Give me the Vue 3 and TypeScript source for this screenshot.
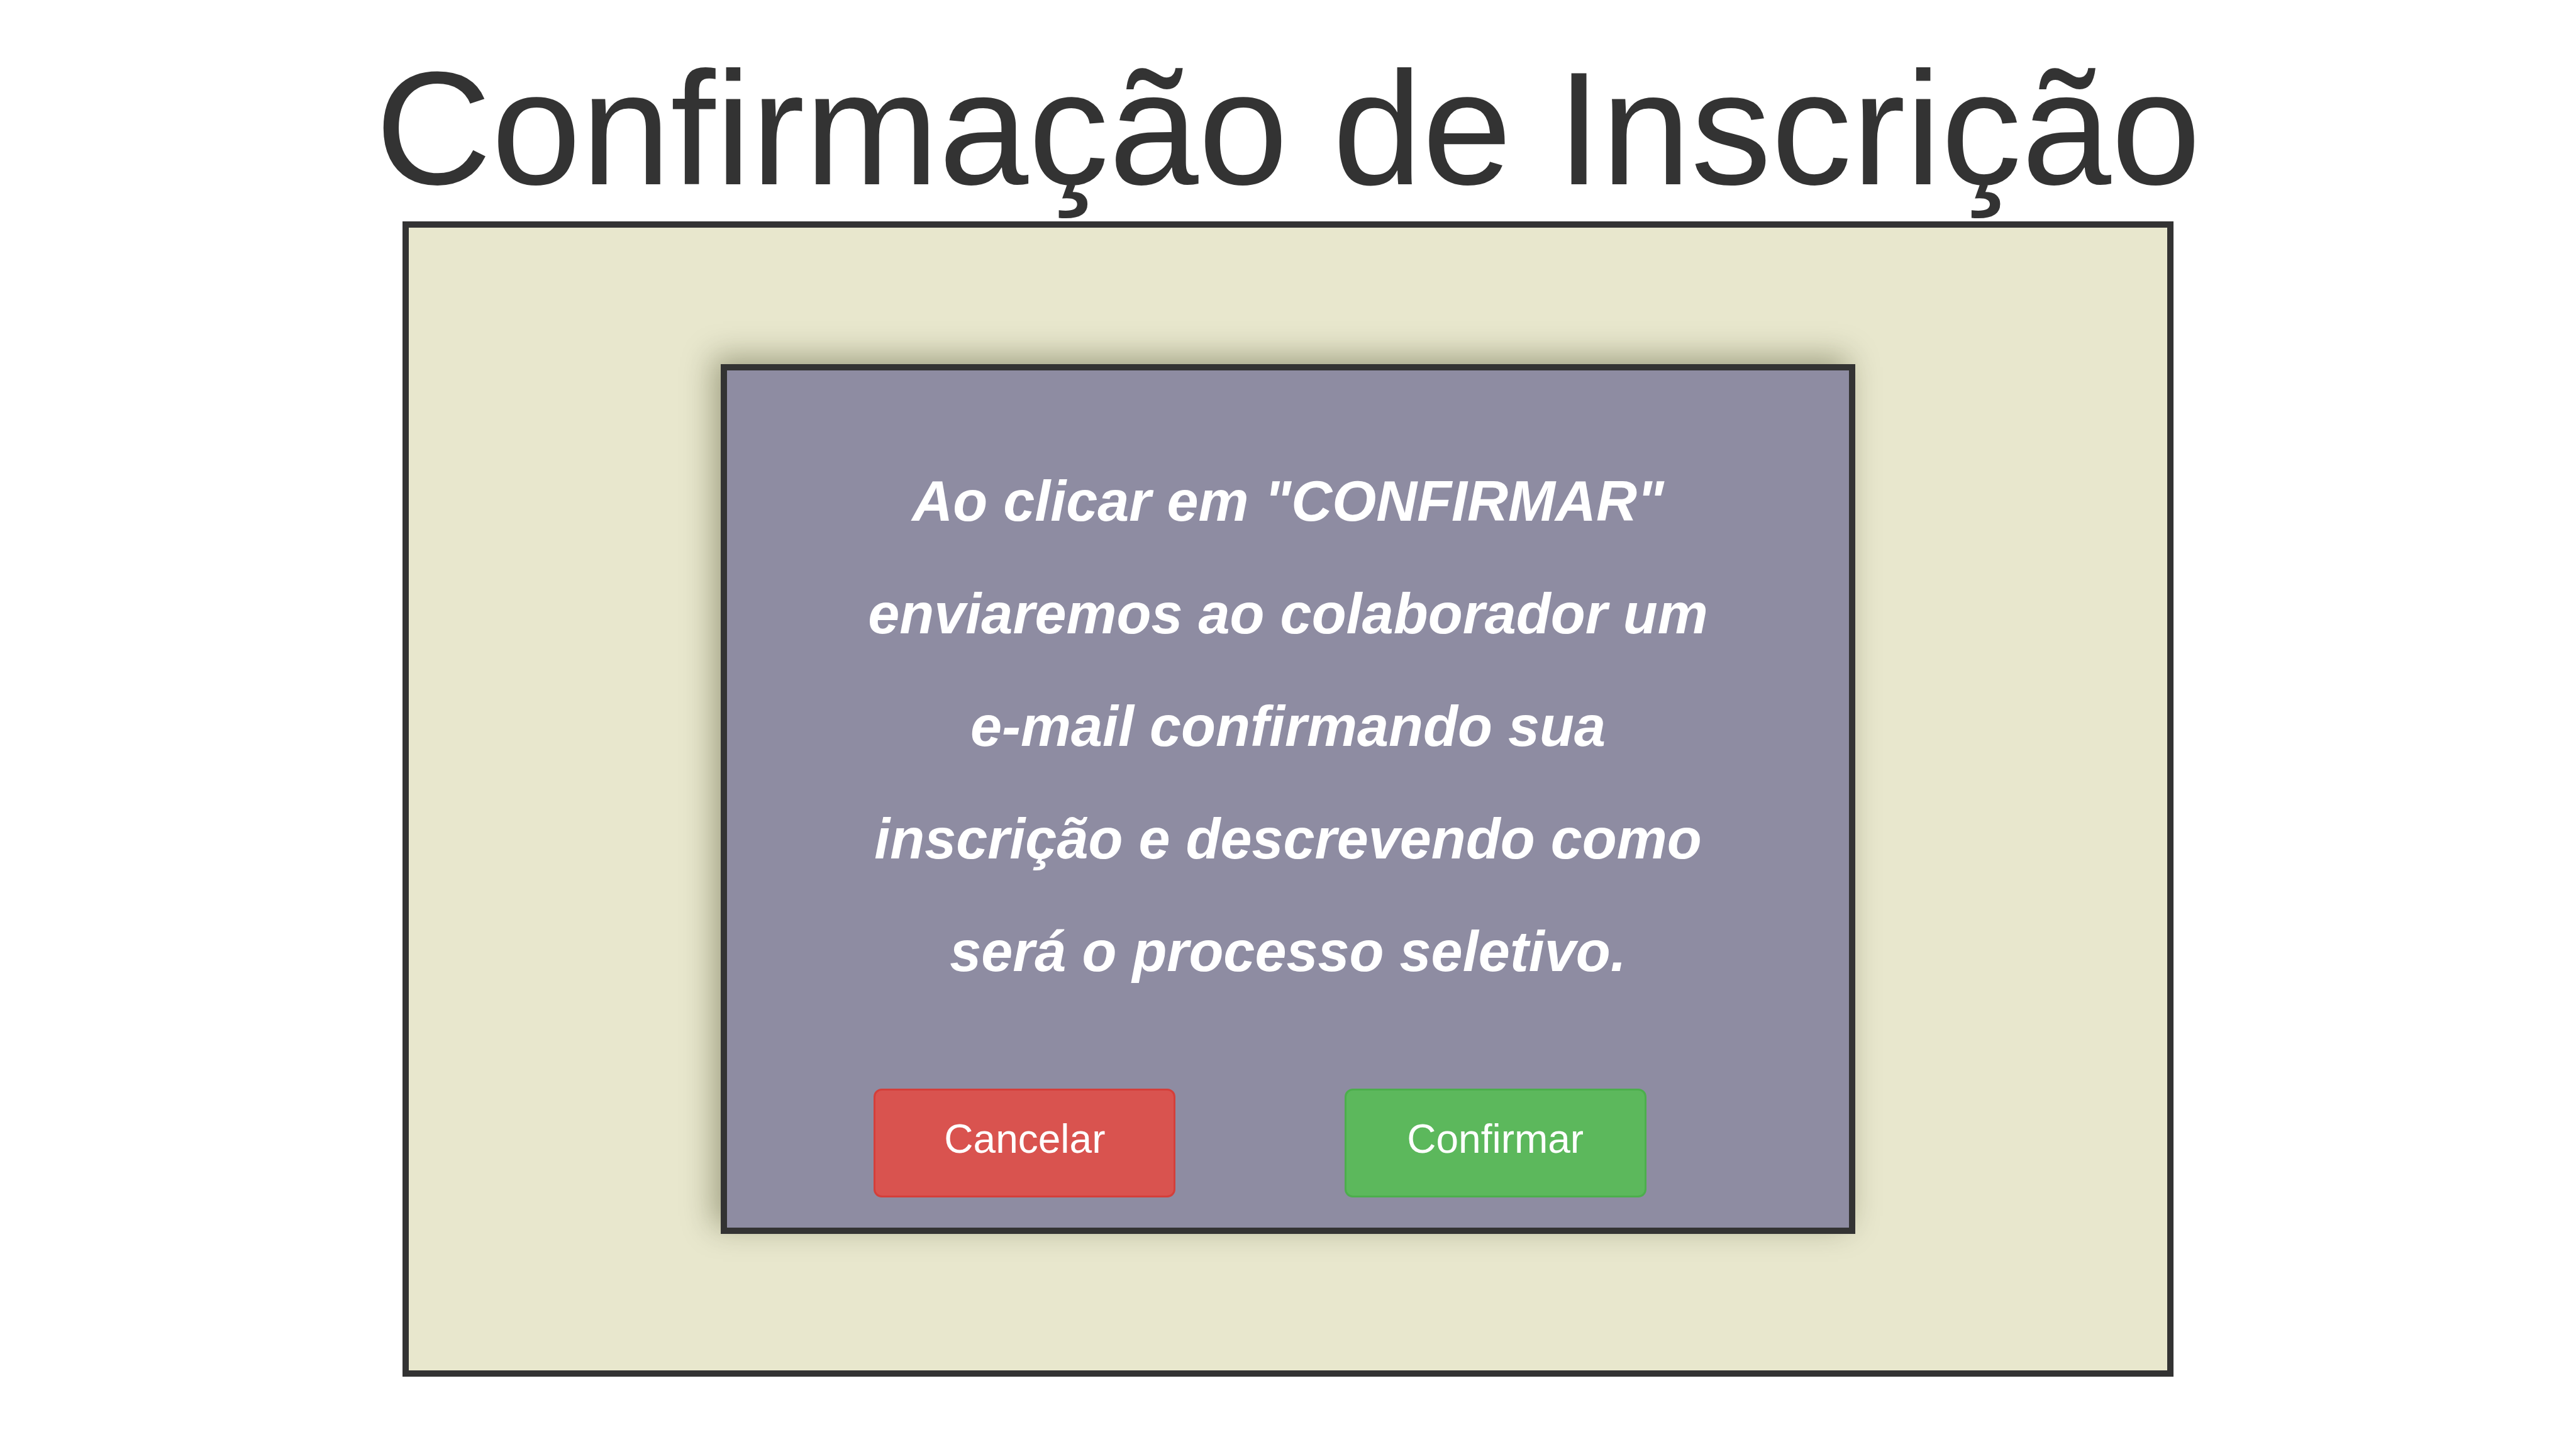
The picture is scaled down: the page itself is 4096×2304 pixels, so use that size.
<script setup lang="ts">
import { ref } from 'vue'

const status = ref<'pending' | 'cancelled' | 'confirmed'>('pending')
</script>

<template>
  <main class="page" :data-status="status">
    <h1 class="title">Confirmação de Inscrição</h1>
    <section class="panel">
      <div class="dialog">
        <p class="message">
          Ao clicar em "CONFIRMAR" enviaremos ao colaborador um e-mail confirmando sua inscrição e
          descrevendo como será o processo seletivo.
        </p>
        <div class="actions">
          <button type="button" class="btn btn-danger" @click="status = 'cancelled'">Cancelar</button>
          <button type="button" class="btn btn-success" @click="status = 'confirmed'">Confirmar</button>
        </div>
      </div>
    </section>
  </main>
</template>

<style>
body {
  background: #fff;
}
</style>

<style scoped>
.page {
  display: flex;
  flex-direction: column;
  align-items: center;
  padding: 64px 0;
  color: #333;
  font-family: Arial, "Liberation Sans", sans-serif;
  font-variant-ligatures: none;
}

.title {
  margin: 0 0 8px;
  font-size: 256px;
  font-weight: 400;
  line-height: 280px;
  white-space: nowrap;
}

.panel {
  box-sizing: border-box;
  display: flex;
  justify-content: center;
  width: 68.75%;
  padding: 217px 0;
  border: 10px solid #333;
  background: #e8e7cd;
}

.dialog {
  box-sizing: border-box;
  width: 64.55%;
  padding: 119px 0 48px;
  border: 10px solid #333;
  background: #8e8ca2;
  box-shadow: -12px -12px 46px rgba(36, 40, 0, 0.36);
}

.message {
  width: 77%;
  margin: 0 auto 128px;
  color: #fff;
  font-size: 90px;
  font-style: italic;
  font-weight: 700;
  line-height: 179px;
  text-align: center;
}

.actions {
  display: flex;
  gap: 17.3%;
  padding-left: 13.1%;
}

.btn {
  box-sizing: border-box;
  width: 480px;
  padding: 32px 0 44px;
  border: 3px solid;
  border-radius: 13px;
  color: #fff;
  font-family: inherit;
  font-size: 64px;
  line-height: 91px;
  cursor: pointer;
}

.btn-danger {
  border-color: #d43f3a;
  background: #d9534f;
}

.btn-success {
  border-color: #4cae4c;
  background: #5cb85c;
}
</style>
